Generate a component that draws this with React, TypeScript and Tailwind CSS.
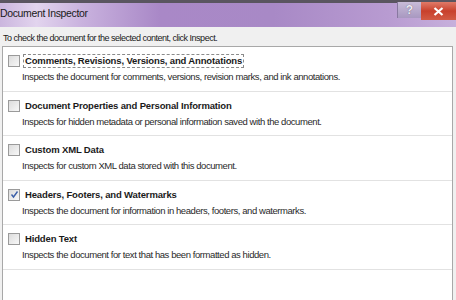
import React from "react";

const items = [
  { title: "Comments, Revisions, Versions, and Annotations", desc: "Inspects the document for comments, versions, revision marks, and ink annotations.", checked: false, focus: true },
  { title: "Document Properties and Personal Information", desc: "Inspects for hidden metadata or personal information saved with the document.", checked: false },
  { title: "Custom XML Data", desc: "Inspects for custom XML data stored with this document.", checked: false },
  { title: "Headers, Footers, and Watermarks", desc: "Inspects the document for information in headers, footers, and watermarks.", checked: true },
  { title: "Hidden Text", desc: "Inspects the document for text that has been formatted as hidden.", checked: false },
];

function Box({ checked }: { checked: boolean }) {
  return (
    <div className="w-[12px] h-[12px] border border-[#9a9a9a] bg-gradient-to-br from-[#dcdcdc] to-[#f8f8f8] flex items-center justify-center shrink-0">
      {checked && (
        <svg width="9" height="9" viewBox="0 0 9 9">
          <path d="M1.5 4.5 L3.5 7 L7.5 1.5" stroke="#3b5fa8" strokeWidth="1.4" fill="none" />
        </svg>
      )}
    </div>
  );
}

export default function App() {
  return (
    <div className="w-[456px] h-[300px] overflow-hidden bg-[#f0f0f0] flex flex-col" style={{ fontFamily: "'Liberation Sans', Arial, sans-serif" }}>
      <div className="h-[3px] bg-[#5a5560] shrink-0" />
      <div className="h-[24px] shrink-0 flex items-start bg-[linear-gradient(90deg,#cbb6de_0%,#e2d4ee_8%,#c9b2de_18%,#a988c7_35%,#a889c6_60%,#b89bd1_85%,#c7b0dc_100%)]">
        <div className="text-[10.5px] tracking-[-0.35px] text-[#1a1a1a] pt-[4px] leading-[13px]">Document Inspector</div>
        <div className="flex-1" />
        <div className="w-[24px] h-[16px] -mt-[1px] border-l border-[#8878a0] bg-gradient-to-b from-[#c8bcd8] to-[#a898c0] flex items-center justify-center text-[12px] font-bold text-[#eeeaf4] leading-none" style={{ textShadow: "0 0 1px #505060" }}>?</div>
        <div className="w-[35px] h-[18px] -mt-[1px] bg-gradient-to-b from-[#e07a68] via-[#c8402c] to-[#d25a44] flex items-center justify-center">
          <svg width="11" height="9" viewBox="0 0 11 9">
            <path d="M1.5 1 L9.5 8 M9.5 1 L1.5 8" stroke="#fff" strokeWidth="2.2" />
          </svg>
        </div>
      </div>
      <div className="text-[9px] tracking-[-0.5px] text-[#1a1a1a] pl-[3px] pt-[5px] h-[19px] leading-[12px]">To check the document for the selected content, click Inspect.</div>
      <div className="ml-[2px] mr-[3px] flex-1 bg-white border border-[#a8a8a8] border-b-0">
        {items.map((it, i) => (
          <div key={i} className="h-[44.5px] border-b border-[#e2e2e2] pl-[5px] pt-[7px]">
            <div className="flex items-center gap-[4px] h-[14px]">
              <Box checked={it.checked} />
              <div className={`text-[9.5px] tracking-[-0.15px] font-bold text-[#1a1a1a] leading-[12px] px-[1px] ${it.focus ? "outline outline-1 outline-dashed outline-[#8a8a8a]" : ""}`}>{it.title}</div>
            </div>
            <div className="text-[9.5px] tracking-[-0.43px] text-[#2a2a2a] pl-[14px] pt-[3px] leading-[12px]">{it.desc}</div>
          </div>
        ))}
      </div>
    </div>
  );
}
